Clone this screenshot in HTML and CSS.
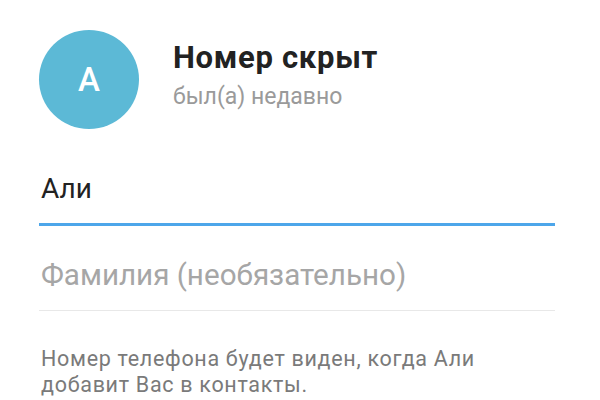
FILE: index.html
```html
<!DOCTYPE html>
<html lang="ru">
<head>
<meta charset="utf-8">
<link rel="stylesheet" href="styles.css">
</head>
<body>
<div class="page">
  <div class="header">
    <div class="avatar">A</div>
    <div class="info">
      <div class="title">Номер скрыт</div>
      <div class="status">был(а) недавно</div>
    </div>
  </div>
  <div class="field field-active">Али</div>
  <div class="field field-empty">Фамилия (необязательно)</div>
  <div class="hint">Номер телефона будет виден, когда Али добавит Вас в контакты.</div>
</div>
</body>
</html>
```
FILE: styles.css
```css
html, body {
  margin: 0;
  padding: 0;
  background: #ffffff;
}
body {
  font-family: Roboto, "Noto Sans", sans-serif;
  width: 600px;
  height: 400px;
  overflow: hidden;
}
.page {
  padding: 30px 45px 0 39px;
}
.header {
  display: flex;
  align-items: flex-start;
}
.avatar {
  width: 100px;
  height: 99px;
  border-radius: 50%;
  background: #5cb9d6;
  color: #ffffff;
  font-size: 33px;
  font-weight: 500;
  display: flex;
  align-items: center;
  justify-content: center;
  flex: none;
}
.info {
  margin-left: 34px;
  padding-top: 10px;
}
.title {
  font-size: 31px;
  line-height: 35px;
  font-weight: 700;
  letter-spacing: 0.7px;
  color: #222222;
}
.status {
  margin-top: 7px;
  font-size: 23px;
  line-height: 30px;
  color: #9a9a9a;
}
.field {
  font-size: 28px;
  line-height: 34px;
  padding-left: 2px;
}
.field-active {
  margin-top: 43px;
  padding-bottom: 17px;
  color: #222222;
  border-bottom: 3px solid #4da6ea;
}
.field-empty {
  margin-top: 32px;
  padding-bottom: 18px;
  font-size: 29.6px;
  color: #a6a6a6;
  border-bottom: 1px solid #e8e8e8;
}
.hint {
  margin-top: 35px;
  padding-left: 2px;
  max-width: 490px;
  font-size: 21.5px;
  line-height: 26px;
  letter-spacing: 0.7px;
  color: #7a7a7a;
}
```
